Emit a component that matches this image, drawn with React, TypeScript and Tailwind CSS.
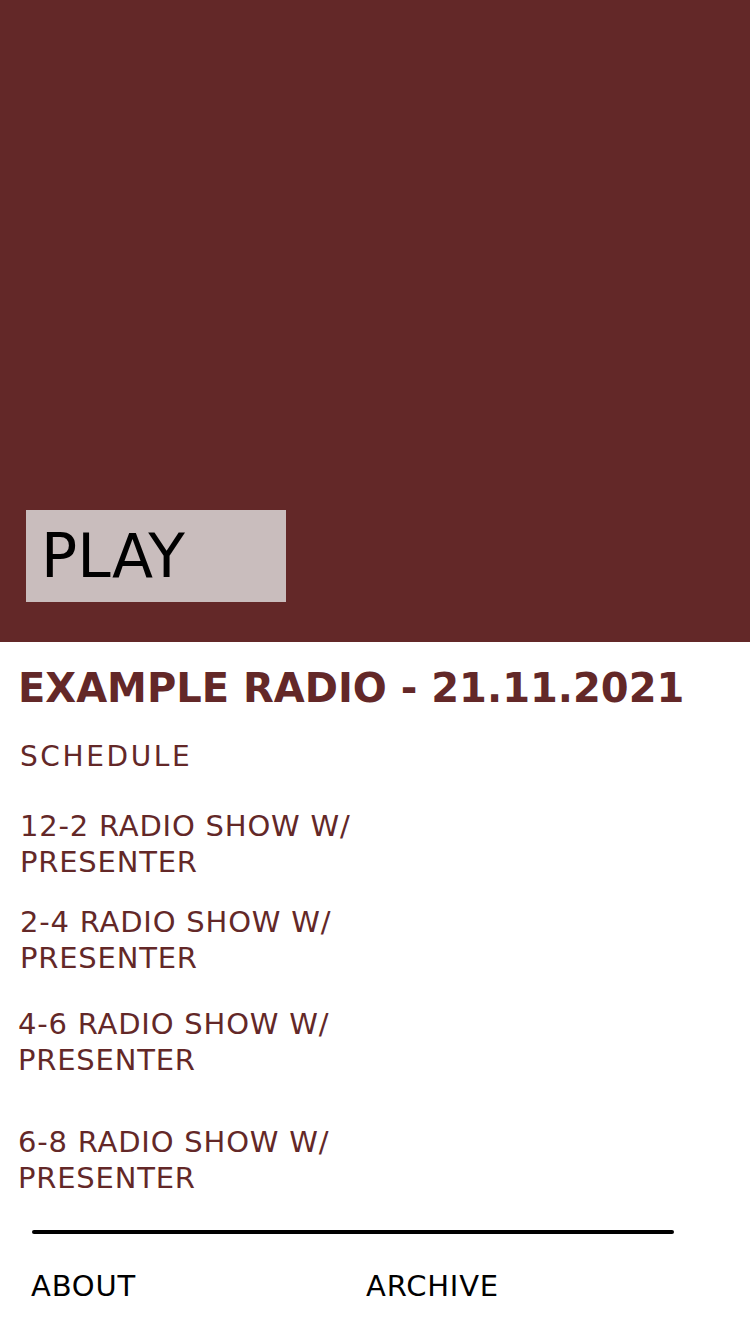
import React from "react";

const shows = [
  { time: "12-2", cls: "mt-[33px] ml-[20px]" },
  { time: "2-4", cls: "mt-[24px] ml-[20px]" },
  { time: "4-6", cls: "mt-[30px] ml-[18px]" },
  { time: "6-8", cls: "mt-[46px] ml-[18px]" },
];

export default function App() {
  return (
    <div className="min-h-[1334px] bg-white font-['DejaVu_Sans',sans-serif]">
      {/* player */}
      <div className="h-[642px] bg-[#632828] flex flex-col justify-end pb-[40px] pl-[26px]">
        <button className="w-[260px] h-[92px] bg-[#c9bdbd] text-left pl-[15px] text-[60px] leading-none text-black">
          PLAY
        </button>
      </div>

      <div className="text-[#632828]">
        <h1 className="mt-[22px] ml-[18px] text-[40px] leading-[48px] font-bold">
          EXAMPLE RADIO - 21.11.2021
        </h1>
        <h2 className="mt-[27px] ml-[20px] text-[28px] leading-[36px] tracking-[2.6px]">SCHEDULE</h2>

        {shows.map((s) => (
          <p key={s.time} className={`${s.cls} max-w-[360px] text-[29px] leading-[36px] tracking-[0.8px]`}>
            {s.time} RADIO SHOW W/ PRESENTER
          </p>
        ))}
      </div>

      <div className="mt-[34px] ml-[32px] w-[642px] h-[4px] rounded-full bg-black" />

      <nav className="mt-[34px] flex text-[29px] leading-[36px] text-black tracking-[0.8px]">
        <a className="ml-[31px] w-[335px]">ABOUT</a>
        <a>ARCHIVE</a>
      </nav>
    </div>
  );
}
